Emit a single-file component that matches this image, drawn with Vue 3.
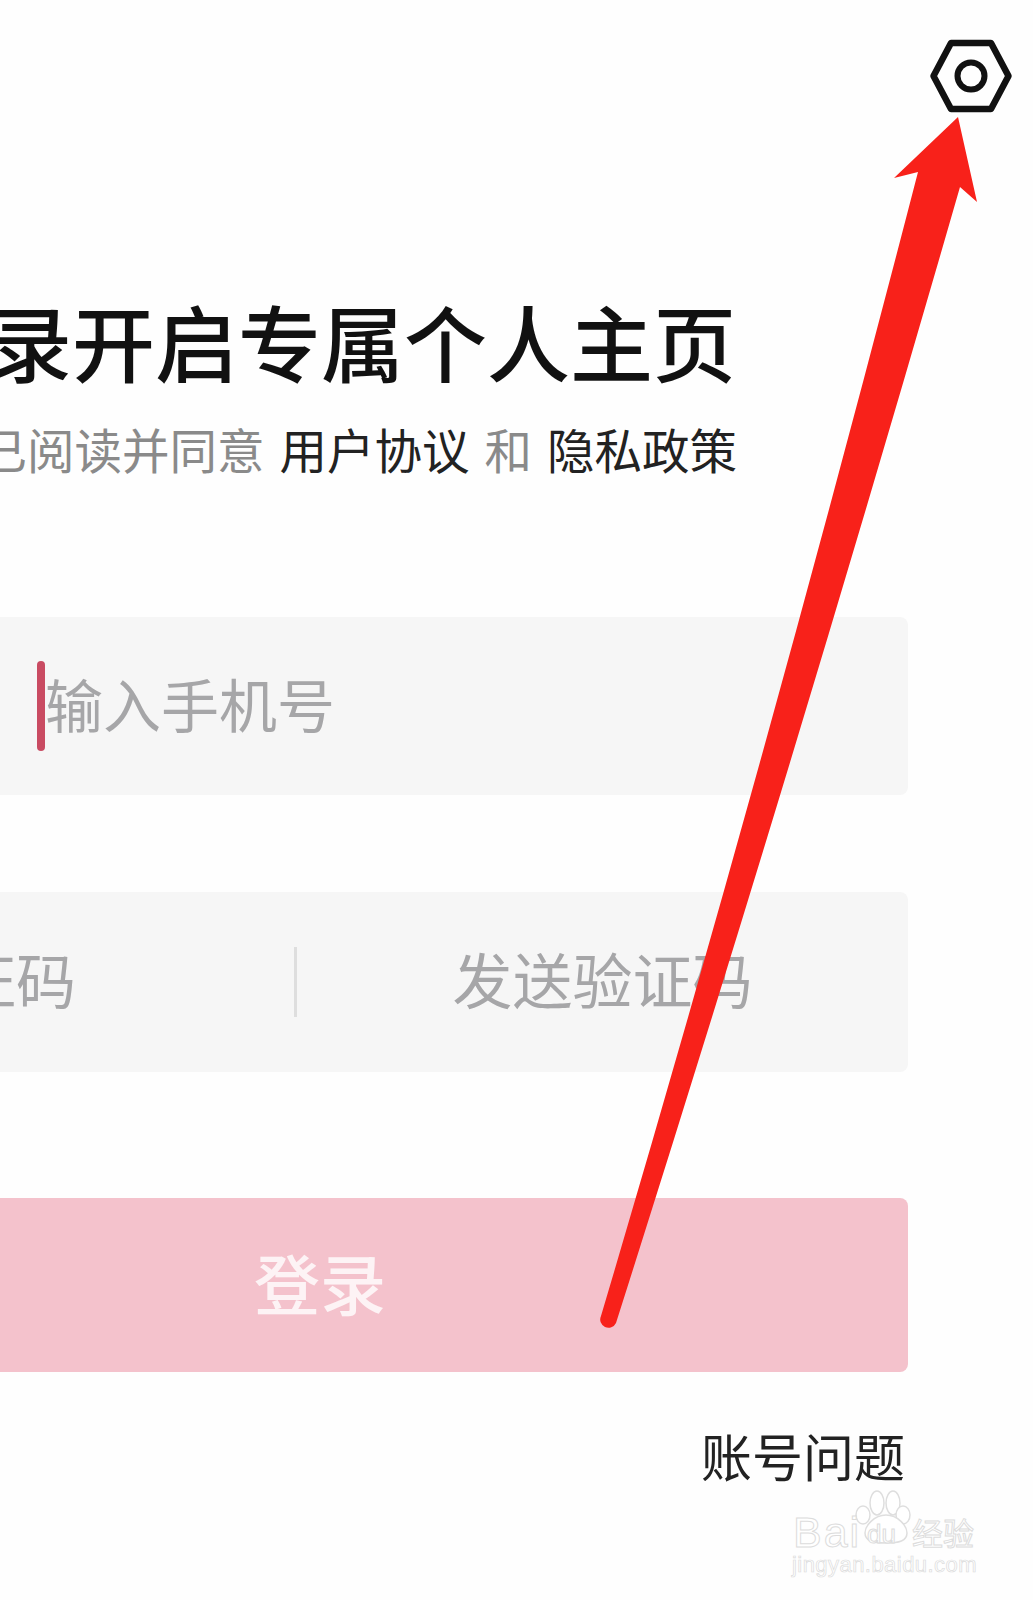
<template>
  <div class="page">
    <header class="top">
      <button class="settings-btn" aria-label="设置">
        <svg width="84" height="76" viewBox="0 0 84 76">
          <path d="M22 5H62L79.5 38L62 71H22L4.5 38Z" fill="none" stroke="#111" stroke-width="6.5" stroke-linejoin="round" />
          <circle cx="42" cy="38" r="13.5" fill="none" stroke="#111" stroke-width="6" />
        </svg>
      </button>
    </header>

    <main class="sheet">
      <h1 class="title">登录开启专属个人主页</h1>
      <p class="agree">
        <span>已阅读并同意</span>
        <a>用户协议</a>
        <span>和</span>
        <a>隐私政策</a>
      </p>

      <div class="field phone">
        <i class="caret"></i>
        <span class="hint">输入手机号</span>
      </div>

      <div class="field code">
        <span class="hint code-input">输入验证码</span>
        <i class="divider"></i>
        <span class="hint send">发送验证码</span>
      </div>

      <button class="login-btn">登录</button>
      <div class="help">账号问题</div>
    </main>

    <!-- annotation arrow pasted over the screenshot -->
    <svg class="arrow" width="1033" height="1600" viewBox="0 0 1033 1600">
      <path
        d="M958 117L977 202L960 187Q795 760 616 1323A8 8 0 0 1 601 1316Q766 760 918 172L894 178Z"
        fill="#f8211a"
      />
    </svg>

    <div class="watermark">
      <svg class="paw" width="58" height="56" viewBox="0 0 58 56">
        <g fill="#fff" stroke="#dedede" stroke-width="1.5">
          <ellipse cx="9" cy="25" rx="7" ry="9" />
          <ellipse cx="23" cy="13" rx="7" ry="12" />
          <ellipse cx="39" cy="13" rx="7" ry="12" />
          <ellipse cx="49" cy="25" rx="7" ry="9" />
          <path d="M32 25C44 25 53 36 53 43C53 51 45 53 32 53C19 53 11 51 11 43C11 36 20 25 32 25Z" />
        </g>
      </svg>
      <span class="wm-bai">Bai</span>
      <span class="wm-du">du</span>
      <span class="wm-jy">经验</span>
      <span class="wm-url">jingyan.baidu.com</span>
    </div>
  </div>
</template>

<script setup>
</script>

<style>
html, body { margin: 0; background: #fff; }
</style>

<style scoped>
.page {
  position: relative;
  width: 1033px;
  height: 1600px;
  overflow: hidden;
  background: #fefefe;
  font-family: "Noto Sans CJK SC", "Liberation Sans", sans-serif;
}

.top {
  display: flex;
  justify-content: flex-end;
  padding: 38px 20px 0 0;
}

.settings-btn {
  display: block;
  padding: 0;
  border: none;
  background: none;
  height: 76px;
}

.sheet {
  width: 1176px;
  margin-left: -268px;
}

.title {
  margin: 176px 0 0;
  padding-right: 172px;
  text-align: right;
  white-space: nowrap;
  font-size: 83px;
  line-height: 100px;
  font-weight: 500;
  color: #111;
}

.agree {
  display: flex;
  justify-content: flex-end;
  gap: 15px;
  margin: 29px 0 0;
  padding-right: 171px;
  font-size: 47.5px;
  line-height: 60px;
  color: #8a8a8a;
}

.agree a { color: #222; }

.field {
  display: flex;
  align-items: center;
  background: #f6f6f6;
  border-radius: 8px;
}

.phone {
  height: 178px;
  margin-top: 138px;
  padding-left: 305px;
}

.phone .hint { margin-bottom: 6px; }

.code {
  height: 180px;
  margin-top: 97px;
  padding-left: 44px;
}

.caret {
  flex: none;
  width: 8px;
  height: 90px;
  border-radius: 4px;
  background: #c94b62;
}

.hint {
  font-size: 58px;
  line-height: 70px;
  color: #a6a6a8;
}

.code .hint {
  font-size: 60px;
  margin-bottom: 8px;
}

.code-input { flex: 0 0 518px; }

.divider {
  flex: none;
  width: 3px;
  height: 70px;
  background: #dedede;
}

.send {
  flex: 1;
  text-align: center;
}

.login-btn {
  display: block;
  width: 100%;
  height: 174px;
  margin-top: 126px;
  padding: 0 0 8px;
  border: none;
  border-radius: 8px;
  background: #f4c2cc;
  color: #fdf3f5;
  font-family: inherit;
  font-size: 66px;
  font-weight: 500;
}

.help {
  margin-top: 53px;
  text-align: right;
  padding-right: 3px;
  font-size: 51px;
  line-height: 60px;
  color: #222;
}

.arrow {
  position: absolute;
  left: 0;
  top: 0;
  pointer-events: none;
}

.watermark {
  position: absolute;
  left: 790px;
  top: 1488px;
  width: 192px;
  height: 92px;
  font-family: "Liberation Sans", "Noto Sans CJK SC", sans-serif;
  color: #fff;
  -webkit-text-stroke: 1px #dcdcdc;
}

.paw { position: absolute; left: 64px; top: 2px; }

.wm-bai {
  position: absolute;
  left: 3px;
  top: 23px;
  font-size: 43px;
  line-height: 42px;
  letter-spacing: 2px;
}

.wm-du {
  position: absolute;
  left: 77px;
  top: 33px;
  font-size: 26px;
  line-height: 26px;
}

.wm-jy {
  position: absolute;
  left: 122px;
  top: 26px;
  font-family: "Noto Sans CJK SC", sans-serif;
  font-size: 31px;
  line-height: 36px;
}

.wm-url {
  position: absolute;
  left: 2px;
  top: 64px;
  font-size: 22px;
  line-height: 26px;
  letter-spacing: 0.45px;
  -webkit-text-stroke-width: 0.7px;
  white-space: nowrap;
}
</style>
